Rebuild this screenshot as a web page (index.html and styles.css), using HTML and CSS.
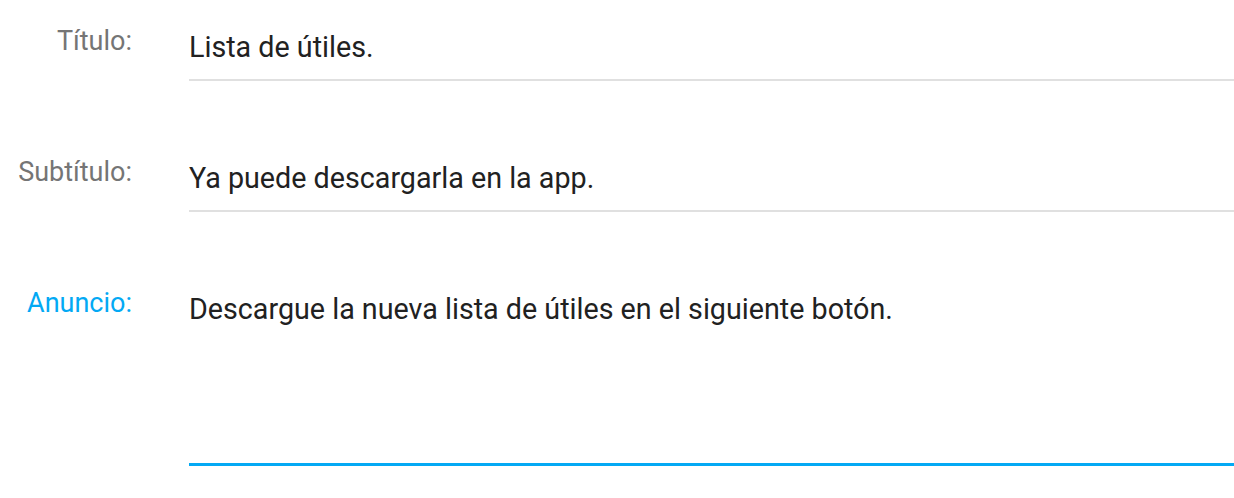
FILE: index.html
```html
<!DOCTYPE html>
<html lang="es">
<head>
    <meta charset="UTF-8">
    <meta name="viewport" content="width=device-width, initial-scale=1.0">
    <title>Anuncio</title>
    <link rel="stylesheet" href="styles.css">
</head>
<body>
    <form class="form">
        <div class="field">
            <label class="field-label">Título:</label>
            <div class="field-value">Lista de útiles.</div>
        </div>
        <div class="field">
            <label class="field-label">Subtítulo:</label>
            <div class="field-value">Ya puede descargarla en la app.</div>
        </div>
        <div class="field active">
            <label class="field-label">Anuncio:</label>
            <div class="field-value multiline">Descargue la nueva lista de útiles en el siguiente botón.</div>
        </div>
    </form>
</body>
</html>
```

FILE: styles.css
```css
body {
    margin: 0;
    padding: 0;
    background-color: #fff;
    font-family: Roboto, "Noto Sans", sans-serif;
    overflow: hidden;
}
.form {
    padding-top: 24px;
}
.field {
    display: grid;
    grid-template-columns: 132px 1fr;
    column-gap: 57px;
    margin-bottom: 74px;
}
.field:last-child {
    margin-bottom: 0;
}
.field-label {
    font-size: 27px;
    line-height: 34px;
    color: #757575;
    text-align: right;
}
.field-value {
    font-size: 28.7px;
    line-height: 34px;
    color: #212121;
    padding: 6px 0 15px;
    border-bottom: 2px solid #e0e0e0;
}
.field-value.multiline {
    padding-bottom: 137px;
}
.field.active .field-label {
    color: #03a9f4;
}
.field.active .field-value {
    border-bottom: 3px solid #03a9f4;
}
```
